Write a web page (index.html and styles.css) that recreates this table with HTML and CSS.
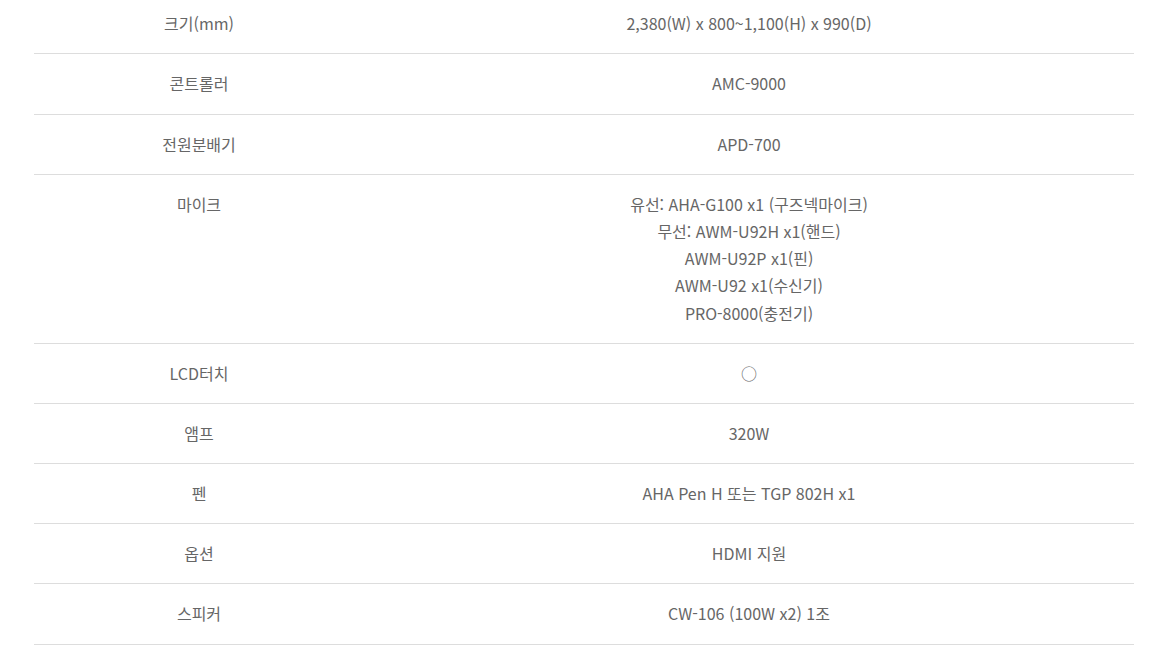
FILE: index.html
```html
<!DOCTYPE html>
<html lang="ko">
<head>
<meta charset="utf-8">
<link rel="stylesheet" href="styles.css">
</head>
<body>
<div class="wrap">
<div class="spec">
<div class="row"><div class="label">크기(mm)</div><div class="value">2,380(W) x 800~1,100(H) x 990(D)</div></div>
<div class="row"><div class="label">콘트롤러</div><div class="value">AMC-9000</div></div>
<div class="row"><div class="label">전원분배기</div><div class="value">APD-700</div></div>
<div class="row"><div class="label">마이크</div><div class="value">유선: AHA-G100 x1 (구즈넥마이크)<br>무선: AWM-U92H x1(핸드)<br>AWM-U92P x1(핀)<br>AWM-U92 x1(수신기)<br>PRO-8000(충전기)</div></div>
<div class="row"><div class="label">LCD터치</div><div class="value">○</div></div>
<div class="row"><div class="label">앰프</div><div class="value">320W</div></div>
<div class="row"><div class="label">펜</div><div class="value">AHA Pen H 또는 TGP 802H x1</div></div>
<div class="row"><div class="label">옵션</div><div class="value">HDMI 지원</div></div>
<div class="row"><div class="label">스피커</div><div class="value">CW-106 (100W x2) 1조</div></div>
</div>
</div>
</body>
</html>
```
FILE: styles.css
```css
html, body {
  margin: 0;
  padding: 0;
  background: #fff;
}
body {
  font-family: "Noto Sans CJK KR", "Noto Sans", sans-serif;
  color: #666;
  font-size: 16px;
  overflow: hidden;
}
.wrap {
  width: 1100px;
  margin: -5.8px 0 0 34px;
}
.spec {
  display: flex;
  flex-direction: column;
}
.row {
  display: grid;
  grid-template-columns: 30% 70%;
  align-items: start;
  border-bottom: 1px solid #ddd;
}
.label,
.value {
  text-align: center;
  padding: 16px 10px;
  line-height: 1.7;
}
```
